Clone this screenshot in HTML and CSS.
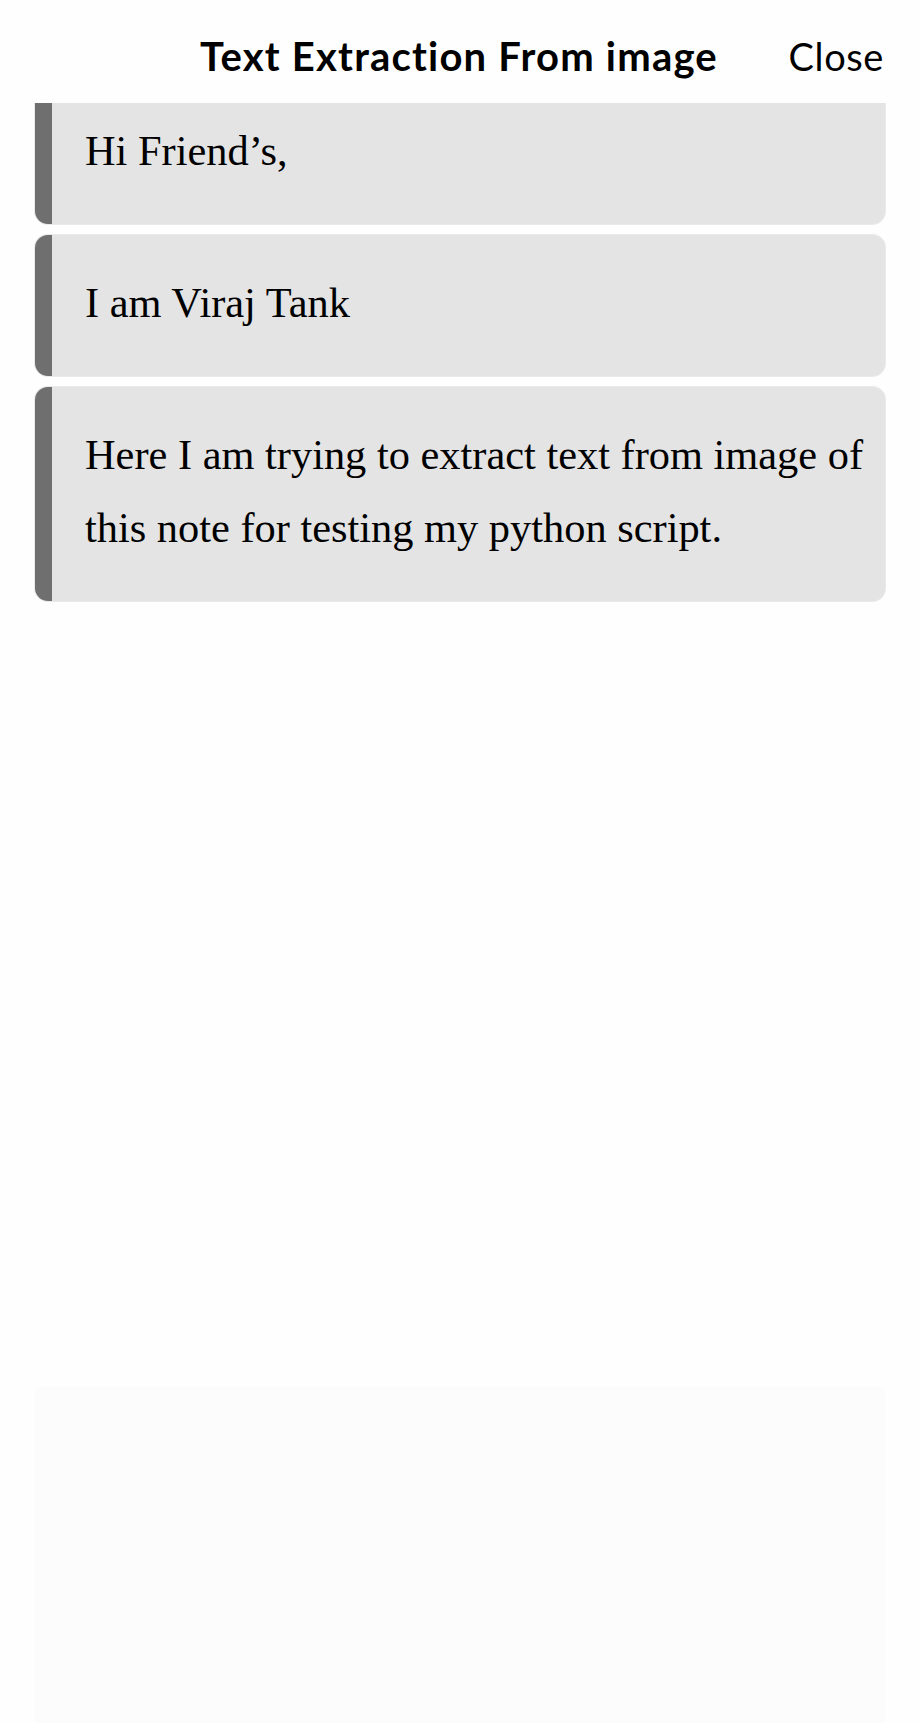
FILE: index.html
```html
<!DOCTYPE html>
<html lang="en">
<head>
<meta charset="utf-8">
<title>Text Extraction From image</title>
<link rel="stylesheet" href="styles.css">
</head>
<body>
<div class="screen">
  <header class="topbar">
    <h1 class="title">Text Extraction From image</h1>
    <button class="close">Close</button>
  </header>
  <div class="viewport">
    <div class="list">
      <div class="note"><p>Hi Friend’s,</p></div>
      <div class="note"><p>I am Viraj Tank</p></div>
      <div class="note"><p>Here I am trying to extract text from image of this note for testing my python script.</p></div>
    </div>
    <div class="panel"></div>
  </div>
</div>
</body>
</html>
```

FILE: styles.css
```css
* { box-sizing: border-box; }
html, body { margin: 0; padding: 0; background: #fefefe; }
.screen {
  width: 920px;
  height: 1723px;
  display: flex;
  flex-direction: column;
  overflow: hidden;
}
.topbar {
  height: 103px;
  flex: none;
  position: relative;
  display: flex;
  align-items: center;
  justify-content: center;
  padding: 0 37px 0 35px;
  background: #fefefe;
  z-index: 1;
  font-family: Lato, "Noto Sans", sans-serif;
  color: #000;
}
.title {
  margin: 0;
  font-size: 40px;
  font-weight: 700;
  letter-spacing: 1.2px;
  line-height: 1;
  padding-top: 8px;
}
.close {
  position: absolute;
  right: 36px;
  top: 0;
  bottom: 0;
  padding: 8px 0 0;
  margin: 0;
  border: 0;
  background: none;
  font-family: Lato, "Noto Sans", sans-serif;
  font-size: 38px;
  font-weight: 400;
  letter-spacing: 0.6px;
  color: #000;
  line-height: 1;
}
.viewport {
  flex: 1;
  overflow: hidden;
  display: flex;
  flex-direction: column;
  padding: 0 35px;
}
.list {
  margin-top: -20px;
  display: flex;
  flex-direction: column;
  gap: 11px;
}
.note {
  background: #e4e4e4;
  border-left: 17px solid #6f6f6f;
  border-radius: 13px;
  box-shadow: 0 0 0 1px #e9e9e9;
  padding: 31px 16px 37px 33px;
}
.note p {
  margin: 0;
  font-family: "Liberation Serif", "Times New Roman", serif;
  font-size: 42.4px;
  line-height: 73px;
  color: #000;
}
.panel {
  margin-top: 786px;
  flex: 1;
  background: #fcfcfc;
}
```
